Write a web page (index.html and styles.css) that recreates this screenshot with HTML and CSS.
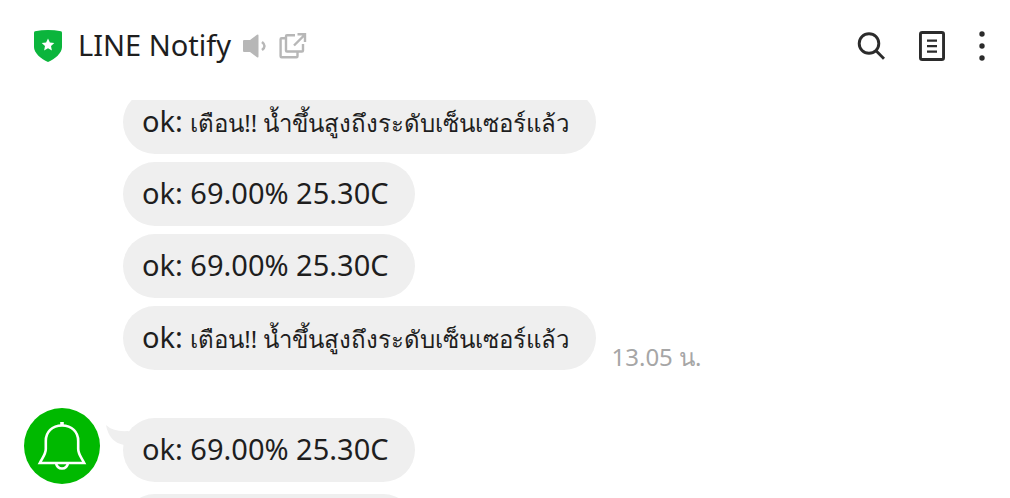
FILE: index.html
```
<!DOCTYPE html>
<html lang="th">

<head>
    <meta charset="UTF-8">
    <meta name="viewport" content="width=device-width, initial-scale=1.0">
    <title>LINE Notify</title>
    <link rel="stylesheet" href="styles.css">
</head>

<body>
    <header class="header">
        <svg class="shield" width="28" height="32" viewBox="0 0 28 32" aria-hidden="true">
            <path d="M0 2.500Q0 1.500 1 1.300Q14-1.300 27 1.300Q28 1.500 28 2.500V17C28 23 21 29 14 32C7 29 0 23 0 17Z" fill="#0bb53c"/>
            <path d="M14 8.500L15.900 12.600L20.300 13.100L17 16.100L17.900 20.500L14 18.300L10.100 20.500L11 16.100L7.700 13.100L12.100 12.600Z" fill="#fff"/>
        </svg>
        <h1 class="title">LINE Notify</h1>
        <button class="icon-btn sound" aria-label="Mute">
            <svg width="24" height="24" viewBox="0 0 24 24">
                <path d="M0 7Q0 6 1 6H7L14 0.800Q15.500 0 15.500 1.500V22.500Q15.500 24 14 23.200L7 18H1Q0 18 0 17Z" fill="#b7b7b7"/>
                <path d="M19 8Q24 12 19 16" fill="none" stroke="#b7b7b7" stroke-width="2.500"/>
            </svg>
        </button>
        <button class="icon-btn" aria-label="Open in new window">
            <svg width="28" height="28" viewBox="0 0 28 28" fill="none" stroke="#b7b7b7" stroke-width="2.400">
                <path d="M16 3.200H8Q7 3.200 7 4.200V18.500Q7 19.500 8 19.500H23Q24 19.500 24 18.500V12"/>
                <path d="M7 6.200H2.600Q1.600 6.200 1.600 7.200V24.200Q1.600 25.200 2.600 25.200H17.500Q18.500 25.200 18.500 24.200V19.500"/>
                <path d="M15 13.500L25.500 3M18.500 2.200H26V10"/>
            </svg>
        </button>
        <div class="actions">
            <button class="icon-btn" aria-label="Search">
                <svg width="28" height="28" viewBox="0 0 28 28" fill="none" stroke="#2b2b2b" stroke-width="2.900">
                    <circle cx="12" cy="11.500" r="9.800"/>
                    <path d="M18.800 18.500L27 26.700"/>
                </svg>
            </button>
            <button class="icon-btn" aria-label="Notes">
                <svg width="26" height="30" viewBox="0 0 26 30" fill="none" stroke="#2b2b2b" stroke-width="2.900">
                    <rect x="1.450" y="1.450" width="23.100" height="27.100" rx="1.800"/>
                    <path d="M8 9.700H18M8 15.200H18M8 20.700H18" stroke-width="2.300"/>
                </svg>
            </button>
            <button class="icon-btn" aria-label="More">
                <svg width="6" height="30" viewBox="0 0 6 30" fill="#2b2b2b">
                    <circle cx="3" cy="3" r="2.700"/>
                    <circle cx="3" cy="15" r="2.700"/>
                    <circle cx="3" cy="27" r="2.700"/>
                </svg>
            </button>
        </div>
    </header>

    <main class="chat">
        <section class="group">
            <div class="messages">
                <p class="bubble">ok: <span class="thai">เตือน!! น้ำขึ้นสูงถึงระดับเซ็นเซอร์แล้ว</span></p>
                <p class="bubble">ok: 69.00% 25.30C</p>
                <p class="bubble">ok: 69.00% 25.30C</p>
                <div class="row">
                    <p class="bubble">ok: <span class="thai">เตือน!! น้ำขึ้นสูงถึงระดับเซ็นเซอร์แล้ว</span></p>
                    <time class="time">13.05 น.</time>
                </div>
            </div>
        </section>
        <section class="group">
            <div class="avatar">
                <svg width="76" height="76" viewBox="0 0 76 76" fill="none" stroke="#fff" stroke-width="2.600" aria-hidden="true">
                    <circle cx="38" cy="38" r="38" fill="#00b900" stroke="none"/>
                    <path d="M38 14V17.500" stroke-width="3.600"/>
                    <path d="M38 17.500C28 17.500 21.800 24 21.800 33V41C21.800 46 19 49 15.800 55H60.200C57 49 54.200 46 54.200 41V33C54.200 24 48 17.500 38 17.500Z"/>
                    <path d="M32 55Q33 60.500 38 60.500Q43 60.500 44 55"/>
                </svg>
            </div>
            <div class="messages">
                <p class="bubble first">ok: 69.00% 25.30C
                    <svg class="tail" width="34" height="24" viewBox="0 0 34 24" aria-hidden="true">
                        <path d="M0 0Q7 7 22 6L34 12L24 24L18 20Q3 17 0 0Z" fill="#efefef"/>
                    </svg>
                </p>
                <p class="bubble empty"></p>
            </div>
        </section>
    </main>
</body>

</html>
```
FILE: styles.css
```
* {
    box-sizing: border-box;
}
body {
    display: flex;
    flex-direction: column;
    height: 100vh;
    margin: 0;
    overflow: hidden;
    background-color: #fff;
    color: #1e1e1e;
    font-family: "Noto Sans", "Open Sans", sans-serif;
}
.header {
    display: flex;
    flex-shrink: 0;
    align-items: center;
    padding: 24px 25px 32px 34px;
}
.title {
    margin: 0 12px 0 16px;
    padding-bottom: 2px;
    font-size: 29px;
    font-weight: 400;
    line-height: 42px;
}
.icon-btn {
    display: flex;
    padding: 0;
    border: none;
    background: none;
    cursor: pointer;
}
.sound {
    margin-right: 12px;
}
.actions {
    display: flex;
    align-items: center;
    gap: 34px;
    margin-left: auto;
}
.chat {
    flex: 1;
    min-height: 0;
    overflow: hidden;
}
.group {
    display: flex;
    padding-left: 123px;
}
.group:first-child {
    margin-top: -10px;
}
.group + .group {
    gap: 23px;
    margin-top: 38px;
    padding-left: 24px;
}
.messages {
    display: flex;
    flex-direction: column;
    align-items: flex-start;
    gap: 8px;
}
.group + .group .messages {
    gap: 12px;
    padding-top: 10px;
}
.bubble {
    margin: 0;
    padding: 11px 26px 13px 19px;
    border-radius: 32px;
    background-color: #efefef;
    font-size: 29px;
    line-height: 40px;
    white-space: nowrap;
}
.thai {
    font-size: 24px;
    line-height: 24px;
}
.first {
    position: relative;
}
.tail {
    position: absolute;
    top: 7px;
    left: -17px;
    z-index: -1;
}
.empty {
    align-self: stretch;
    min-height: 64px;
}
.row {
    display: flex;
    align-items: flex-end;
    gap: 16px;
}
.time {
    color: #a6a6a6;
    font-size: 24px;
    line-height: 26px;
}
.avatar {
    display: flex;
    align-items: flex-start;
}
```
